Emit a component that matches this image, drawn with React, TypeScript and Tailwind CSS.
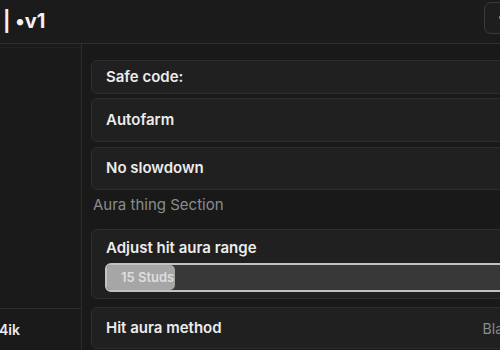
export default function App() {
  const font = { fontFamily: '"Inter", "Noto Sans", sans-serif' };
  return (
    <div className="w-[500px] h-[350px] overflow-hidden bg-[#191919] text-white" style={font}>
      <div className="w-[540px] h-full flex flex-col">
        {/* Header */}
        <div className="h-[44px] flex items-center justify-between border-b border-[#303030] bg-[#1b1b1b] pl-[3px] pr-[16px] shrink-0">
          <span className="text-[20px] font-bold text-[#f2f2f2] -mt-[2px]">| •v1</span>
          <div className="w-[40px] h-[32px] -mt-[8px] rounded-[7px] border border-[#3a3a3a] bg-[#1e1e1e] flex items-center pl-[14px]">
            <span className="w-[3px] h-[3px] rounded-full bg-[#9a9a9a]" />
          </div>
        </div>

        <div className="flex flex-1 min-h-0">
          {/* Sidebar */}
          <div className="w-[82px] shrink-0 border-r border-[#2c2c2c] bg-[#1a1a1a] flex flex-col">
            <div className="h-[4px] border-b border-[#222]" />
            <div className="flex-1" />
            <div className="h-[42px] border-t border-[#2c2c2c] flex items-center">
              <span className="text-[14px] font-semibold text-[#eeeeee] -ml-[1px]">4ik</span>
            </div>
          </div>

          {/* Main */}
          <div className="flex-1 flex flex-col pl-[9px] pt-[16px]">
            <div className="h-[34px] rounded-[6px] border border-[#2e2e2e] bg-[#202020] flex items-center pl-[14px]">
              <span className="text-[15px] font-semibold text-[#ececec]">Safe code:</span>
            </div>
            <div className="mt-[4px] h-[44px] rounded-[6px] border border-[#2e2e2e] bg-[#202020] flex items-center pl-[14px]">
              <span className="text-[15px] font-semibold text-[#ececec]">Autofarm</span>
            </div>
            <div className="mt-[5px] h-[43px] rounded-[6px] border border-[#2e2e2e] bg-[#202020] flex items-center pl-[14px]">
              <span className="text-[15px] font-semibold text-[#ececec]">No slowdown</span>
            </div>
            <div className="mt-[6px] h-[18px] pl-[2px] flex items-center">
              <span className="text-[15px] text-[#8c8c8c]">Aura thing Section</span>
            </div>
            <div className="mt-[15px] h-[70px] rounded-[6px] border border-[#2e2e2e] bg-[#202020] pl-[13px] pt-[8px]">
              <div className="pl-[1px] text-[15px] font-semibold text-[#ececec] leading-[20px]">Adjust hit aura range</div>
              <div className="mt-[5px] h-[29px] rounded-[6px] border-2 border-[#c2c2c2] bg-[#383838] relative overflow-hidden">
                <div className="absolute left-0 top-0 bottom-0 w-[68px] bg-[#a6a6a6] rounded-r-[5px]" />
                <span className="absolute left-[14px] top-0 bottom-0 flex items-center text-[13px] font-semibold text-[#dedede]">15 Studs</span>
              </div>
            </div>
            <div className="mt-[8px] h-[42px] rounded-[6px] border border-[#2e2e2e] bg-[#202020] flex items-center pl-[14px]">
              <span className="text-[15px] font-semibold text-[#ececec]">Hit aura method</span>
              <span className="ml-[261px] text-[14px] text-[#8c8c8c]">Blatant</span>
            </div>
          </div>
        </div>
      </div>
    </div>
  );
}
